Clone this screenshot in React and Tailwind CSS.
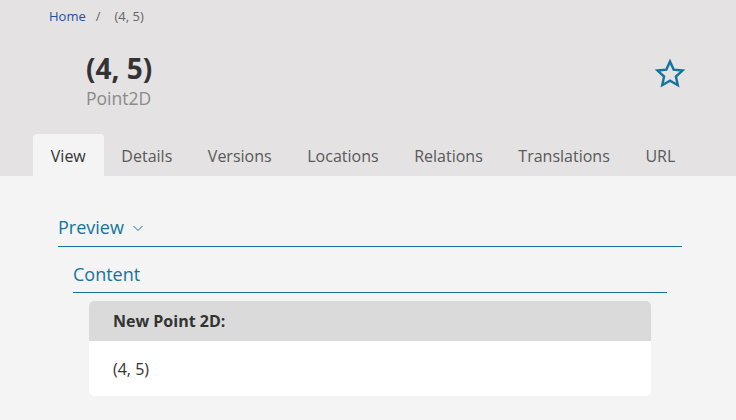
import React from "react";

const tabs = ["View", "Details", "Versions", "Locations", "Relations", "Translations", "URL"];

export default function App() {
  return (
    <div className="w-[736px] h-[420px] overflow-hidden bg-[#f4f4f4]" style={{ fontFamily: '"Open Sans", sans-serif' }}>
      <div className="bg-[#e4e2e3] h-[176px] flex flex-col">
        <div className="pl-[49px] pt-[7px] h-[24px] flex items-center gap-[10px] text-[13px] leading-[18px]">
          <span className="text-[#1d4fa3]">Home</span>
          <span className="text-[#666]">/</span>
          <span className="text-[#666] ml-[4px]">(4, 5)</span>
        </div>
        <div className="flex justify-between pl-[86px] pr-[50px] pt-[26px]">
          <div className="flex flex-col">
            <div className="text-[28px] font-bold leading-[36px] text-[#333]">(4, 5)</div>
            <div className="text-[17.5px] leading-[22px] text-[#8a8a8a] mt-[1px]">Point2D</div>
          </div>
          <svg width="32" height="32" viewBox="0 0 24 24" fill="none" stroke="#16739c" strokeWidth="1.8" strokeLinejoin="miter" className="mt-[8px]">
            <path d="M12 2.6l2.75 6.1 6.65.7-4.97 4.47 1.4 6.55L12 17.06l-5.83 3.36 1.4-6.55L2.6 9.4l6.65-.7z" />
          </svg>
        </div>
        <div className="mt-auto flex pl-[33px] h-[42px]">
          {tabs.map((t, i) => (
            <div
              key={t}
              className={
                "px-[17.8px] pt-[2px] flex items-center text-[16px] rounded-t-[4px] " +
                (i === 0 ? "bg-[#f4f4f4] text-[#333]" : "text-[#595959]")
              }
            >
              {t}
            </div>
          ))}
        </div>
      </div>
      <div className="pl-[58px] pr-[54px] pt-[39px]">
        <div className="border-b border-[#16739c] pb-[7px] flex items-center gap-[8px] text-[18px] leading-[24px] text-[#16739c]">
          <span>Preview</span>
          <svg width="12" height="12" viewBox="0 0 12 12" fill="none" stroke="#16739c" strokeWidth="1" className="mt-[1px]">
            <path d="M1.5 4l4.5 4.5 4.5-4.5" />
          </svg>
        </div>
        <div className="pl-[15px] pr-[15px] pt-[15px]">
          <div className="border-b border-[#16739c] pb-[6px] text-[18px] leading-[24px] text-[#16739c]">Content</div>
          <div className="px-[16px] pt-[8px]">
            <div className="rounded-[5px] overflow-hidden bg-white">
              <div className="bg-[#dadada] h-[40px] flex items-center px-[24px] text-[16px] font-bold text-[#333]">New Point 2D:</div>
              <div className="h-[55px] flex items-center px-[24px] text-[16px] text-[#333]">(4, 5)</div>
            </div>
          </div>
        </div>
      </div>
    </div>
  );
}
